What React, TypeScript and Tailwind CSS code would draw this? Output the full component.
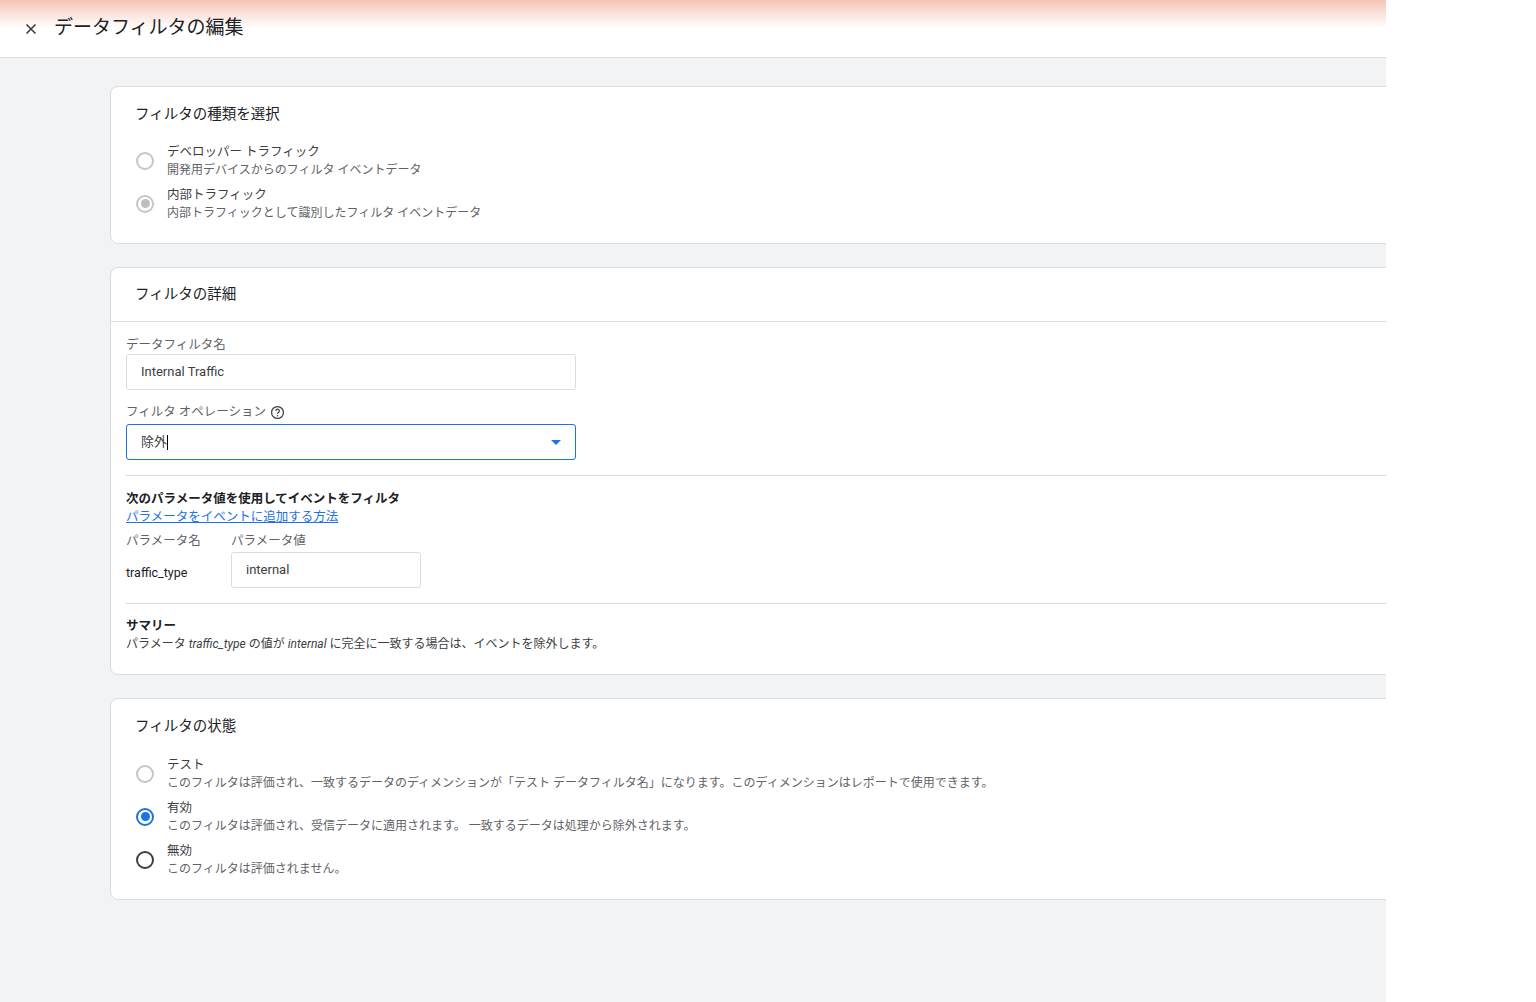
import React from "react";

const Radio = ({ state }: { state: "off" | "disabled" | "on" | "dark" }) => {
  if (state === "on")
    return (
      <div className="w-[18px] h-[18px] rounded-full border-2 border-[#1a73e8] flex items-center justify-center">
        <div className="w-[9px] h-[9px] rounded-full bg-[#1a73e8]" />
      </div>
    );
  if (state === "disabled")
    return (
      <div className="w-[18px] h-[18px] rounded-full border-2 border-[#c4c7c5] flex items-center justify-center">
        <div className="w-[9px] h-[9px] rounded-full bg-[#bdbdbd]" />
      </div>
    );
  return (
    <div
      className={`w-[18px] h-[18px] rounded-full border-2 ${
        state === "dark" ? "border-[#3c4043]" : "border-[#c4c7c5]"
      }`}
    />
  );
};

const Option = ({
  state,
  title,
  desc,
}: {
  state: "off" | "disabled" | "on" | "dark";
  title: string;
  desc: string;
}) => (
  <div className="flex items-center h-[43px]">
    <div className="w-[56px] pl-[25px] flex items-center">
      <Radio state={state} />
    </div>
    <div className="flex flex-col leading-[18px]">
      <span className="text-[12.5px] text-[#3c4043]">{title}</span>
      <span className="text-[12px] text-[#5f6368]">{desc}</span>
    </div>
  </div>
);

export default function App() {
  return (
    <div
      className="flex w-[1536px] h-[1002px] bg-white overflow-hidden"
      style={{ fontFamily: "Roboto, 'Noto Sans CJK JP', sans-serif" }}
    >
      <div className="w-[1386px] h-full bg-[#f1f3f4] flex flex-col overflow-hidden">
        <div className="h-[58px] shrink-0 bg-[linear-gradient(to_bottom,#f4c6b8_0px,#fff_28px)] border-b border-[#dadce0] flex items-center pl-[22px] gap-[14px]">
          <svg width="18" height="18" viewBox="0 0 24 24">
            <path d="M6 6L18 18M18 6L6 18" stroke="#3c4043" strokeWidth="2.2" />
          </svg>
          <span className="text-[19px] text-[#202124]">データフィルタの編集</span>
        </div>

        <div className="pl-[110px] pt-[28px] flex flex-col gap-[23px]">
          <div className="w-[1400px] h-[158px] bg-white border border-[#dadce0] rounded-l-[8px] pt-[17px]">
            <div className="pl-[24px] text-[14.5px] text-[#202124] h-[24px]">フィルタの種類を選択</div>
            <div className="mt-[11px]">
              <Option state="off" title="デベロッパー トラフィック" desc="開発用デバイスからのフィルタ イベントデータ" />
              <Option state="disabled" title="内部トラフィック" desc="内部トラフィックとして識別したフィルタ イベントデータ" />
            </div>
          </div>

          <div className="w-[1400px] h-[408px] bg-white border border-[#dadce0] rounded-l-[8px]">
            <div className="h-[54px] border-b border-[#dadce0] pl-[24px] flex items-center text-[14.5px] text-[#202124]">
              フィルタの詳細
            </div>
            <div className="pl-[15px]">
              <div className="pt-[14px] text-[12.5px] text-[#5f6368] h-[32px]">データフィルタ名</div>
              <div className="w-[450px] h-[36px] border border-[#dadce0] rounded-[3px] flex items-center pl-[14px] text-[13px] text-[#3c4043]">
                Internal Traffic
              </div>
              <div className="mt-[12px] h-[21px] flex items-center gap-[4px] text-[12.5px] text-[#5f6368]">
                フィルタ オペレーション
                <svg width="15" height="15" viewBox="0 0 24 24">
                  <circle cx="12" cy="12" r="9.5" fill="none" stroke="#3c4043" strokeWidth="2" />
                  <path d="M9.3 9.5a2.8 2.8 0 1 1 4 2.5c-.9.5-1.3 1-1.3 2" fill="none" stroke="#3c4043" strokeWidth="2" />
                  <circle cx="12" cy="17" r="1.2" fill="#3c4043" />
                </svg>
              </div>
              <div className="mt-[1px] w-[450px] h-[36px] border border-[#1a73e8] rounded-[3px] flex items-center pl-[14px] pr-[14px] text-[13px] text-[#3c4043]">
                <span>除外</span>
                <span className="w-px h-[15px] bg-black" />
                <span className="ml-auto w-0 h-0 border-l-[5px] border-r-[5px] border-t-[5px] border-l-transparent border-r-transparent border-t-[#1a73e8]" />
              </div>
              <div className="mt-[15px] border-t border-[#dadce0]" />
              <div className="pt-[14px] text-[12.5px] font-bold text-[#202124] leading-[18px]">
                次のパラメータ値を使用してイベントをフィルタ
              </div>
              <div className="text-[12.5px] text-[#1a73e8] underline leading-[18px]">パラメータをイベントに追加する方法</div>
              <div className="flex mt-[6px]">
                <div className="w-[105px] flex flex-col">
                  <span className="text-[12.5px] text-[#5f6368] leading-[18px]">パラメータ名</span>
                  <span className="text-[12.5px] text-[#202124] mt-[14px]">traffic_type</span>
                </div>
                <div className="flex flex-col">
                  <span className="text-[12.5px] text-[#5f6368] leading-[18px]">パラメータ値</span>
                  <div className="mt-[2px] w-[190px] h-[36px] border border-[#dadce0] rounded-[3px] flex items-center pl-[14px] text-[13px] text-[#3c4043]">
                    internal
                  </div>
                </div>
              </div>
              <div className="mt-[15px] border-t border-[#dadce0]" />
              <div className="pt-[13px] text-[12.5px] font-bold text-[#202124] leading-[18px]">サマリー</div>
              <div className="text-[12px] text-[#3c4043] leading-[18px]">
                パラメータ <i>traffic_type</i> の値が <i>internal</i> に完全に一致する場合は、イベントを除外します。
              </div>
            </div>
          </div>

          <div className="w-[1400px] h-[202px] bg-white border border-[#dadce0] rounded-l-[8px] pt-[17px]">
            <div className="pl-[24px] text-[14.5px] text-[#202124] h-[24px]">フィルタの状態</div>
            <div className="mt-[12px]">
              <Option state="off" title="テスト" desc="このフィルタは評価され、一致するデータのディメンションが「テスト データフィルタ名」になります。このディメンションはレポートで使用できます。" />
              <Option state="on" title="有効" desc="このフィルタは評価され、受信データに適用されます。 一致するデータは処理から除外されます。" />
              <Option state="dark" title="無効" desc="このフィルタは評価されません。" />
            </div>
          </div>
        </div>
      </div>
    </div>
  );
}
